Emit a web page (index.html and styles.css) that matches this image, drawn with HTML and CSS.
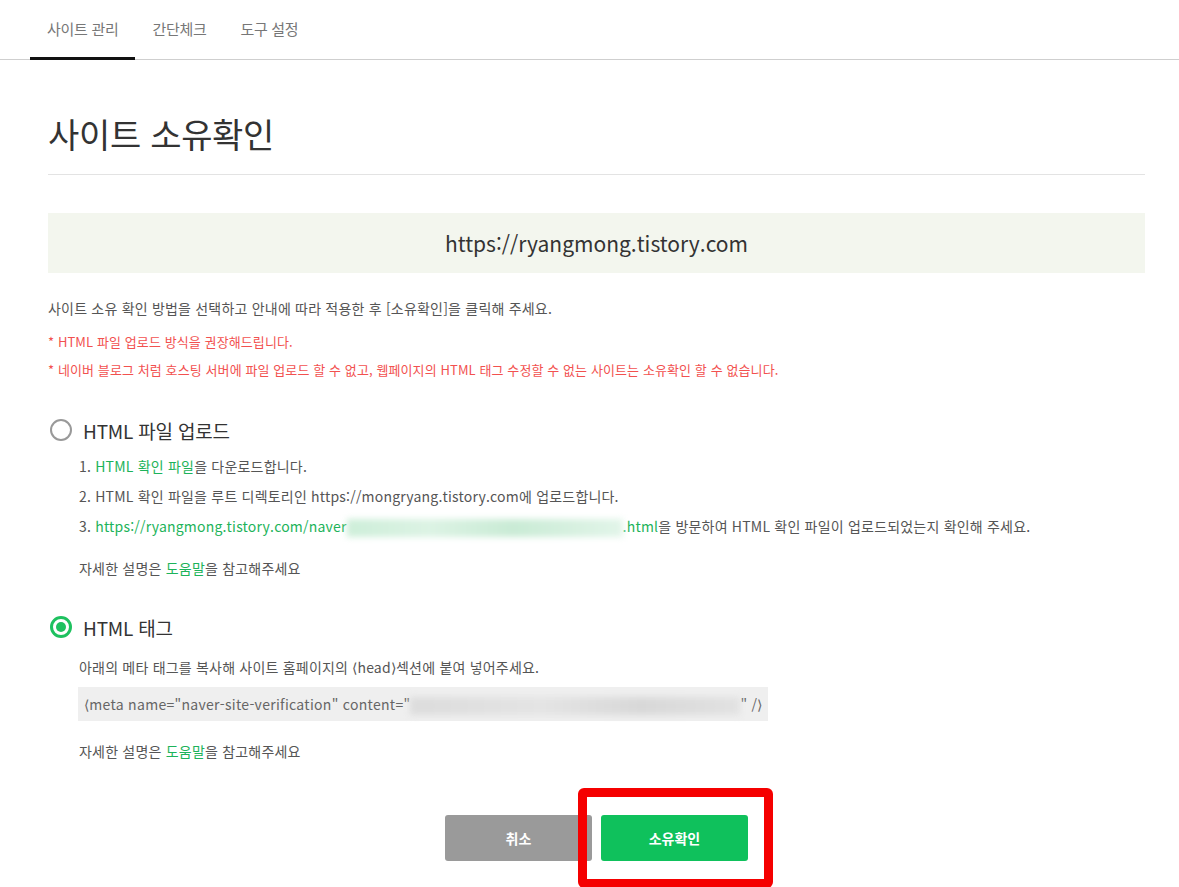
FILE: index.html
```html
<!DOCTYPE html>
<html lang="ko">
<head>
<meta charset="utf-8">
<title>사이트 소유확인</title>
<link rel="stylesheet" href="styles.css">
</head>
<body>
<nav class="tabs">
  <a class="tab active">사이트 관리</a>
  <a class="tab">간단체크</a>
  <a class="tab">도구 설정</a>
</nav>
<main class="content">
  <h1 class="title">사이트 소유확인</h1>
  <div class="site-url">https://ryangmong.tistory.com</div>
  <p class="guide">사이트 소유 확인 방법을 선택하고 안내에 따라 적용한 후 [소유확인]을 클릭해 주세요.</p>
  <p class="warn first">* HTML 파일 업로드 방식을 권장해드립니다.</p>
  <p class="warn">* 네이버 블로그 처럼 호스팅 서버에 파일 업로드 할 수 없고, 웹페이지의 HTML 태그 수정할 수 없는 사이트는 소유확인 할 수 없습니다.</p>

  <section class="method">
    <div class="method-head"><span class="radio"></span><span class="method-name">HTML 파일 업로드</span></div>
    <ol class="steps">
      <li>1. <span class="link">HTML 확인 파일</span>을 다운로드합니다.</li>
      <li>2. HTML 확인 파일을 루트 디렉토리인 https://mongryang.tistory.com에 업로드합니다.</li>
      <li>3. <span class="link">https://ryangmong.tistory.com/naver<span class="blur blur-green"></span>.html</span>을 방문하여 HTML 확인 파일이 업로드되었는지 확인해 주세요.</li>
    </ol>
    <p class="help">자세한 설명은 <span class="link">도움말</span>을 참고해주세요</p>
  </section>

  <section class="method second">
    <div class="method-head"><span class="radio checked"></span><span class="method-name">HTML 태그</span></div>
    <p class="tag-desc">아래의 메타 태그를 복사해 사이트 홈페이지의 ⟨head⟩섹션에 붙여 넣어주세요.</p>
    <div class="code">⟨meta name="naver-site-verification" content="<span class="blur blur-gray"></span>" /⟩</div>
    <p class="help tag-help">자세한 설명은 <span class="link">도움말</span>을 참고해주세요</p>
  </section>

  <div class="buttons">
    <button class="btn cancel">취소</button>
    <button class="btn confirm">소유확인</button>
  </div>
</main>
<div class="highlight"></div>
</body>
</html>
```

FILE: styles.css
```css
* { box-sizing: border-box; }
html, body { margin: 0; padding: 0; }
body {
  font-family: "Noto Sans CJK KR", "Noto Sans", sans-serif;
  color: #555;
  background: #fff;
  position: relative;
  min-height: 887px;
  overflow: hidden;
}
p { margin: 0; }

.tabs {
  display: flex;
  height: 60px;
  padding-left: 30px;
  border-bottom: 1px solid #cfcfcf;
}
.tab {
  display: block;
  padding: 0 17px;
  font-size: 15px;
  letter-spacing: -0.3px;
  line-height: 58px;
  color: #777;
  border-bottom: 3px solid transparent;
  height: 60px;
  margin-bottom: -1px;
}
.tab.active { border-bottom-color: #111; }

.content {
  padding: 0 34px 0 48px;
}
.title {
  margin: 0;
  padding-top: 54px;
  padding-bottom: 20px;
  font-size: 34px;
  line-height: 40px;
  font-weight: 400;
  color: #333;
  letter-spacing: -0.3px;
  border-bottom: 1px solid #e3e3e3;
}
.site-url {
  margin-top: 38px;
  height: 60px;
  line-height: 60px;
  background: #f3f6ee;
  text-align: center;
  font-size: 21px;
  color: #333;
}
.guide {
  margin-top: 25px;
  font-size: 14px;
  line-height: 20px;
  letter-spacing: 0.2px;
  color: #555;
}
.warn {
  margin-top: 8px;
  font-size: 13px;
  line-height: 20px;
  color: #f2514f;
  letter-spacing: 0.1px;
}
.warn.first { margin-top: 14px; }

.method { margin-top: 39px; }
.method.second { margin-top: 38px; }
.method-head {
  display: flex;
  align-items: center;
  height: 22px;
  padding-left: 2px;
}
.radio {
  width: 22px;
  height: 22px;
  border-radius: 50%;
  border: 2px solid #999;
  display: flex;
  align-items: center;
  justify-content: center;
  flex: none;
}
.radio.checked { border: 3px solid #1ec15f; }
.radio.checked::after {
  content: "";
  width: 10px;
  height: 10px;
  border-radius: 50%;
  background: #1ec15f;
}
.method-name {
  margin-left: 11px;
  font-size: 19px;
  color: #333;
  letter-spacing: -0.2px;
}
.steps {
  list-style: none;
  margin: 10px 0 0;
  padding: 0 0 0 31px;
  font-size: 14px;
  line-height: 30px;
  letter-spacing: 0.2px;
}
.link { color: #1db35a; }
.blur {
  display: inline-block;
  vertical-align: middle;
  height: 18px;
  filter: blur(3px);
}
.blur-green {
  width: 276px;
  background: linear-gradient(90deg, #cdeed9, #dcf3e4 30%, #c9ebd5 60%, #e2f5e9);
}
.blur-gray {
  width: 330px;
  background: linear-gradient(90deg, #dcdcdc, #e4e4e4 40%, #d8d8d8 70%, #e2e2e2);
}
.help {
  margin-top: 17px;
  padding-left: 31px;
  font-size: 14px;
  line-height: 20px;
  letter-spacing: 0.2px;
}
.tag-desc {
  margin-top: 19px;
  padding-left: 31px;
  font-size: 14px;
  line-height: 20px;
  letter-spacing: 0.2px;
}
.code {
  margin: 10px 0 0 30px;
  width: 690px;
  height: 34px;
  line-height: 34px;
  padding-left: 6px;
  background: #efefef;
  font-size: 14px;
  color: #666;
  letter-spacing: 0.3px;
}
.tag-help { margin-top: 20px; }

.buttons {
  display: flex;
  justify-content: center;
  gap: 9px;
  margin-top: 54px;
}
.btn {
  width: 147px;
  height: 46px;
  border: 0;
  border-radius: 3px;
  font-family: inherit;
  font-size: 14px;
  font-weight: 700;
  color: #fff;
}
.btn.cancel { background: #9a9a9a; }
.btn.confirm { background: #0fc15c; }

.highlight {
  position: absolute;
  left: 578px;
  top: 788px;
  width: 195px;
  height: 100px;
  border: 9px solid #f50000;
  border-radius: 6px;
}
```
